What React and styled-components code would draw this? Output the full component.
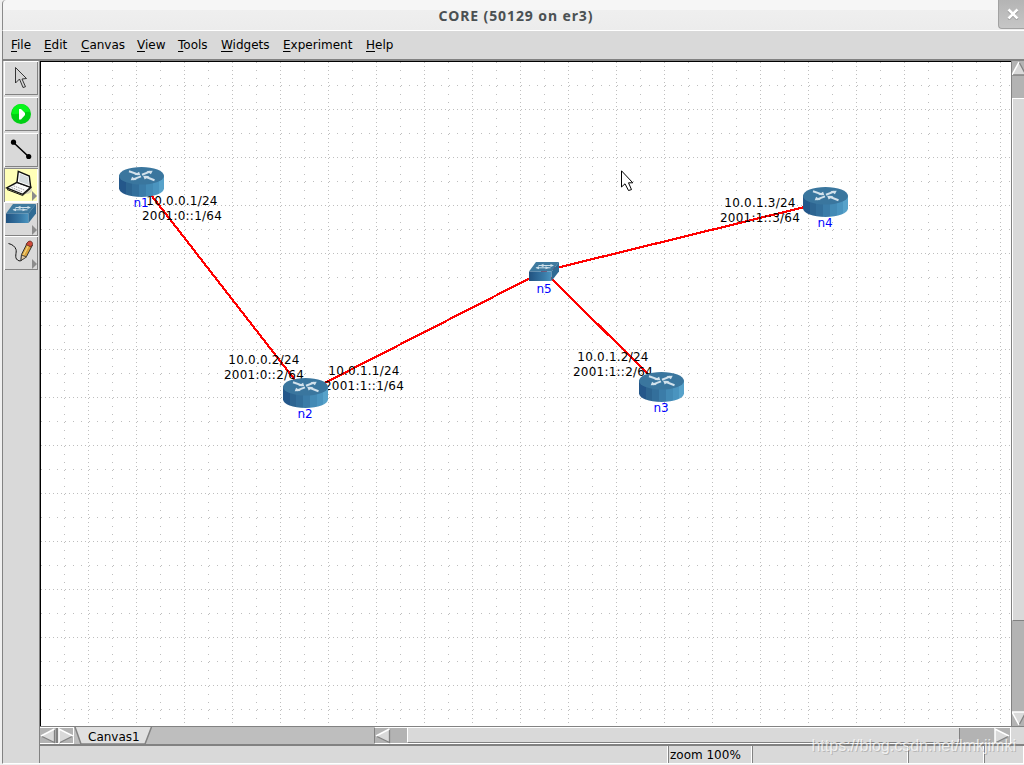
import React from "react";
import styled, { createGlobalStyle } from "styled-components";

// Data -----------------------------------------------------------------------

const menus = [
  { name: "File", width: 33 },
  { name: "Edit", width: 37 },
  { name: "Canvas", width: 56 },
  { name: "View", width: 41 },
  { name: "Tools", width: 43 },
  { name: "Widgets", width: 62 },
  { name: "Experiment", width: 83 },
  { name: "Help", width: 40 },
];

// positions are canvas coordinates of the node centre
const nodes = [
  { id: "n1", type: "router", x: 100, y: 120 },
  { id: "n2", type: "router", x: 264, y: 331 },
  { id: "n3", type: "router", x: 620, y: 325 },
  { id: "n4", type: "router", x: 784, y: 140 },
  { id: "n5", type: "switch", x: 503, y: 209 },
];

const links = [
  ["n1", "n2"],
  ["n2", "n5"],
  ["n5", "n3"],
  ["n5", "n4"],
];

const addresses = [
  { ip4: "10.0.0.1/24", ip6: "2001:0::1/64", x: 141, y: 132 },
  { ip4: "10.0.0.2/24", ip6: "2001:0::2/64", x: 223, y: 291 },
  { ip4: "10.0.1.1/24", ip6: "2001:1::1/64", x: 323, y: 302 },
  { ip4: "10.0.1.2/24", ip6: "2001:1::2/64", x: 572, y: 288 },
  { ip4: "10.0.1.3/24", ip6: "2001:1::3/64", x: 719, y: 134 },
];

const findNode = (id) => nodes.find((node) => node.id === id);

// Icons ----------------------------------------------------------------------

const RouterIcon = () => (
  <svg width="46" height="31" viewBox="-.5 .4 46 31">
    <defs>
      <linearGradient id="routerSide">
        <stop offset="0" stopColor="#24578a" />
        <stop offset=".16" stopColor="#24578a" />
        <stop offset=".16" stopColor="#2d6591" />
        <stop offset=".3" stopColor="#2d6591" />
        <stop offset=".3" stopColor="#336f9b" />
        <stop offset=".45" stopColor="#336f9b" />
        <stop offset=".45" stopColor="#3b7ca8" />
        <stop offset=".6" stopColor="#3b7ca8" />
        <stop offset=".6" stopColor="#438ab5" />
        <stop offset=".75" stopColor="#438ab5" />
        <stop offset=".75" stopColor="#4a94bf" />
        <stop offset=".88" stopColor="#4a94bf" />
        <stop offset=".88" stopColor="#57a2ca" />
        <stop offset="1" stopColor="#57a2ca" />
      </linearGradient>
    </defs>
    <path d="M0.5 9v12.700c0 5 10 8.600 22.500 8.600s22.500-3.600 22.500-8.600V9z" fill="url(#routerSide)" />
    <ellipse cx="23" cy="9.200" rx="22.500" ry="8.800" fill="#3a769e" />
    <g stroke="#d3e2ec" strokeWidth="2">
      <path d="M10.500 4.600l9 3.200" />
      <path d="M23.500 8.200l8-3.200" />
      <path d="M36 13.600l-9-3.400" />
      <path d="M22.500 9.800l-8 3" />
    </g>
    <g fill="#d3e2ec">
      <path d="M21.800 8.600L20.600 5.200l-5 3.200z" />
      <path d="M34.200 4.200l-6.400.2 4.600 3.200z" />
      <path d="M24.600 9.200l6.400.2-4.800 3.400z" />
      <path d="M12.200 13.600l1.400-3.400 4.800 3.200z" />
    </g>
  </svg>
);

const SwitchIcon = ({ width = 30, height = 19 }) => (
  <svg width={width} height={height} viewBox="0 0 30 19" preserveAspectRatio="none">
    <defs>
      <linearGradient id="switchFront">
        <stop offset="0" stopColor="#21527f" />
        <stop offset=".3" stopColor="#2b6492" />
        <stop offset=".65" stopColor="#3879a6" />
        <stop offset="1" stopColor="#4b95c0" />
      </linearGradient>
    </defs>
    <path d="M7 0h23l-7.500 9.500H0z" fill="#3f7a9f" />
    <path d="M0 9.500h22.500V19H0z" fill="url(#switchFront)" />
    <path d="M30 0v9.500L22.500 19V9.500z" fill="#2f6b94" />
    <path d="M9.500 3.500h14M7.500 5.800h14" stroke="#cfe0ea" />
    <path d="M11 3.500l3.500-1.800v3.600zM25 3.500l-3.500-1.500v3zM6.500 5.800l3.500-1.500v3zM20 5.800l-3.500-1.500v3z" fill="#cfe0ea" />
  </svg>
);

const toolIcons = {
  select: (
    <path d="M11.500 6.500v15.500l4-4 3.500 8.500 2.500-.8-3.500-7.700 4.500-.5z" fill="#d4d4d4" stroke="#222" strokeWidth=".9" />
  ),
  start: (
    <>
      <circle cx="17" cy="17" r="10" fill="#00cf14" />
      <path d="M8 17a9 9 0 0 1 18-2c-5-1-11 3-18 2z" fill="#07f51b" />
      <path d="M15 12h2l4 4v2l-4 4.500h-2z" fill="#fff" />
    </>
  ),
  link: (
    <>
      <path d="M9.500 9.500l15 14" stroke="#000" strokeWidth="1.500" />
      <circle cx="9.500" cy="9.200" r="2.600" />
      <circle cx="24.700" cy="23.500" r="2.600" />
    </>
  ),
  host: (
    <>
      <ellipse cx="22" cy="22" rx="6" ry="4" fill="#d8d6bd" />
      <path d="M13 14.300l13.700 5-8 7-16-6.300z" fill="#fafafa" stroke="#111" strokeWidth="1.400" />
      <path d="M3 21.500l15.700 6 8-7.300" fill="none" stroke="#111" />
      <path d="M14.300 3.300l11 4.700 1.400 11.300-13.700-5z" fill="#fff" stroke="#111" strokeWidth="1.400" />
      <path d="M15.800 5.600l8.200 3.600 1 7.800-10-3.600z" fill="#d4dadd" />
      <path d="M9.500 17.800l11.500 4.500M7.500 19.500l10.500 4.300" stroke="#999" strokeDasharray="1.500 1" />
    </>
  ),
  pencil: (
    <>
      <path d="M4.500 7.500c4 1 6.500 3 7.500 6s-2 8 1.500 10.500c2 1.500 3.500 1 5-.5" fill="none" stroke="#111" />
      <path d="M17 24.500l.5-6L23.500 6.500l5 2.500-6 11.500z" fill="#d9a23a" stroke="#333" />
      <path d="M19.500 19l5.500-10.500" stroke="#f3d583" strokeWidth="1.200" />
      <path d="M17 24.500l.5-5.500 5 2z" fill="#dcc5a0" stroke="#333" strokeWidth=".8" />
      <path d="M23.500 6.500c1.500-2.500 5.500-1.500 5 2l-1.500 2.500-5-2.500z" fill="#cf4a3b" stroke="#5c2a22" strokeWidth=".8" />
    </>
  ),
};

const tools = [
  { id: "select", gap: 2 },
  { id: "start", gap: 2 },
  { id: "link", gap: 1 },
  { id: "host", active: true, more: true },
  { id: "switch", more: true },
  { id: "pencil", more: true },
];

const arrows = {
  left: { face: "1,8 15,1 15,15", light: "M1 8L14.500 1", dark: "M14.500 1V14.500L1 8" },
  right: { face: "1,1 15,8 1,15", light: "M1 15V1L15 8", dark: "M15 8L1 15" },
  up: { face: "7,1 14,14 0,14", light: "M0 14L7 1", dark: "M7 1L14 14H0" },
  down: { face: "0,1 14,1 7,14", light: "M14 1H0L7 14", dark: "M7 14L14 1" },
};

const Arrow = ({ direction, width = 16, height = 16, box = "0 0 16 16" }) => (
  <ArrowIcon width={width} height={height} viewBox={box} preserveAspectRatio="none">
    <polygon points={arrows[direction].face} fill="#d9d9d9" />
    <path d={arrows[direction].dark} fill="none" stroke="#828282" strokeWidth="1.300" />
    <path d={arrows[direction].light} fill="none" stroke="#fff" strokeWidth="1.500" />
  </ArrowIcon>
);

// Components -----------------------------------------------------------------

const Toolbar = () => (
  <StyledToolbar>
    {tools.map((tool) => (
      <ToolButton key={tool.id} $active={tool.active} $gap={tool.gap}>
        <svg width="34" height="34" viewBox="0 0 34 34">
          {tool.id === "switch" ? (
            <svg x="2" y="2">
              <SwitchIcon width={30} height={19} />
            </svg>
          ) : (
            toolIcons[tool.id]
          )}
          {tool.more && <path d="M28 23l5 5-5 5z" fill="#8c8c8c" />}
        </svg>
      </ToolButton>
    ))}
  </StyledToolbar>
);

const Topology = () => (
  <Canvas>
    <Drawing width="970" height="664">
      <defs>
        <pattern id="grid" x="-1" y="-1" width="48" height="48" patternUnits="userSpaceOnUse">
          <g stroke="#bebebe" shapeRendering="crispEdges">
            <path d="M.5 1V48M1 .5H48" strokeDasharray="1 3" />
            <path d="M24.500 1V48M1 24.500H48" strokeDasharray="1 7" />
          </g>
        </pattern>
      </defs>
      <rect width="970" height="664" fill="url(#grid)" />
      <g stroke="#ff0000" strokeWidth="2.200" shapeRendering="crispEdges">
        {links.map(([from, to]) => {
          const a = findNode(from);
          const b = findNode(to);
          return <line key={from + to} x1={a.x} y1={a.y} x2={b.x} y2={b.y} />;
        })}
      </g>
    </Drawing>
    {addresses.map(({ ip4, ip6, x, y }) => (
      <Address key={ip6} style={{ left: x, top: y }}>
        <span>{ip4}</span>
        <span>{ip6}</span>
      </Address>
    ))}
    {nodes.map(({ id, type, x, y }) => (
      <Node key={id} style={{ left: x, top: y }} $type={type}>
        {type === "router" ? <RouterIcon /> : <SwitchIcon />}
        <span>{id}</span>
      </Node>
    ))}
    <Pointer width="14" height="22" viewBox="0 0 14 22">
      <path d="M.5 .8v16.200l3.500-3.200 3.500 6.700 3-.9-3-6.800h4.300z" fill="#fff" stroke="#000" />
    </Pointer>
  </Canvas>
);

const App = () => {
  return (
    <Window>
      <GlobalStyle />
      <TitleBar>
        <Title>CORE (50129 on er3)</Title>
        <CloseButton>
          <svg width="12" height="12" viewBox="0 0 12 12">
            <path d="M1.500 2.500l9 9M10.500 2.500l-9 9" stroke="#8d8d8d" strokeWidth="2.500" />
            <path d="M1.500 1.500l9 9M10.500 1.500l-9 9" stroke="#fff" strokeWidth="2.600" />
          </svg>
        </CloseButton>
      </TitleBar>
      <Frame>
        <MenuBar>
          {menus.map(({ name, width }) => (
            <MenuItem key={name} $width={width}>
              <u>{name[0]}</u>
              {name.slice(1)}
            </MenuItem>
          ))}
        </MenuBar>
        <Body>
          <Toolbar />
          <Workspace>
            <View>
              <Topology />
              <VerticalScroll>
                <Arrow direction="up" width={14} height={15} box="0 0 14 15" />
                <VerticalThumb />
                <Arrow direction="down" width={14} height={15} box="0 0 14 15" />
              </VerticalScroll>
            </View>
            <BottomRow>
              <TabScroll>
                <Arrow direction="left" />
                <Divider />
                <Arrow direction="right" />
              </TabScroll>
              <Tab>
                <svg width="79" height="18" viewBox="0 0 79 18">
                  <path d="M1 0l6 17h64l6.500-17" fill="#e0e0e0" stroke="#828282" strokeWidth="1.500" />
                </svg>
                <span>Canvas1</span>
              </Tab>
              <HorizontalScroll>
                <Arrow direction="left" />
                <HorizontalThumb />
                <Arrow direction="right" />
              </HorizontalScroll>
            </BottomRow>
            <StatusBar>
              <StatusCell $width={629} />
              <StatusCell $width={84}>zoom 100%</StatusCell>
              <StatusCell $width={156} />
              <StatusCell $width={76} />
              <StatusCell $width={40} />
            </StatusBar>
          </Workspace>
        </Body>
      </Frame>
      <Watermark>https://blog.csdn.net/lmkjimki</Watermark>
    </Window>
  );
};

// Styled Components ----------------------------------------------------------

const GlobalStyle = createGlobalStyle`
  * {
    box-sizing: border-box;
  }

  body {
    margin: 0;
    overflow: hidden;
    font: 12px/15px "DejaVu Sans", sans-serif;
    color: #000;
  }

  svg {
    display: block;
    flex: none;
  }
`;

const Window = styled.div`
  position: relative;
  display: flex;
  flex-direction: column;
  width: 1024px;
  height: 765px;
  padding-left: 2px;
  overflow: hidden;
  background: #f0f0f0;
`;

const TitleBar = styled.header`
  display: flex;
  flex: none;
  justify-content: flex-end;
  height: 30px;
  border-left: 1px solid #8a8a8a;
  border-top-left-radius: 4px;
  background: linear-gradient(#f6f6f6 0 10px, #efefef 10px, #ececec);
`;

const Title = styled.h1`
  flex: 1;
  margin: 0;
  padding-left: 31px;
  font: bold 14px/32px "Noto Sans", "Open Sans", sans-serif;
  letter-spacing: 0.9px;
  text-align: center;
  color: #4a5052;
`;

const CloseButton = styled.div`
  display: flex;
  align-items: center;
  justify-content: center;
  width: 26px;
  height: 29px;
  padding-left: 3px;
  border: solid #a2a2a2;
  border-width: 0 0 1px 1px;
  border-bottom-left-radius: 4px;
  background: linear-gradient(#b4b4b4, #c6c6c6);
`;

const Frame = styled.div`
  display: flex;
  flex: none;
  flex-direction: column;
  height: 734px;
  border-left: 1px solid #828282;
  border-top: 1px solid #fff;
  border-bottom: 1px solid #fff;
  background: #d9d9d9;
`;

const MenuBar = styled.nav`
  display: flex;
  flex: none;
  height: 30px;
  padding: 7px 0 0 8px;
  border-bottom: 2px solid #828282;
`;

const MenuItem = styled.div`
  width: ${({ $width }) => $width}px;
  white-space: nowrap;

  u {
    text-underline-offset: 2px;
    text-decoration-thickness: 1px;
    text-decoration-skip-ink: none;
  }
`;

const Body = styled.div`
  display: flex;
  flex: 1;
  min-height: 0;
`;

const StyledToolbar = styled.aside`
  display: flex;
  flex: none;
  flex-direction: column;
  width: 36px;
  padding-left: 1px;
`;

const ToolButton = styled.div`
  flex: none;
  width: 34px;
  height: 34px;
  margin-bottom: ${({ $gap = 0 }) => $gap}px;
  background: ${({ $active }) => ($active ? "#ffffb8" : "#d9d9d9")};
  box-shadow: ${({ $active }) =>
    $active
      ? "inset 1px 1px #8a8a8a, inset -1px -1px #fff"
      : "inset 1px 1px #fff, inset -1px -1px #828282"};
`;

const Workspace = styled.main`
  display: flex;
  flex: 1;
  flex-direction: column;
  min-width: 0;
  border-left: 1px solid #828282;
`;

const View = styled.section`
  display: flex;
  flex: none;
  height: 666px;
  border-bottom: 1px solid #828282;
`;

const Canvas = styled.div`
  position: relative;
  flex: none;
  width: 971px;
  height: 665px;
  overflow: hidden;
  border-left: 1px solid #000;
  border-top: 1px solid #000;
  background: #fff;
`;

const Drawing = styled.svg`
  display: block;
`;

const Address = styled.div`
  position: absolute;
  display: flex;
  flex-direction: column;
  align-items: center;
  width: 90px;
  margin-left: -45px;
  line-height: 15px;
  letter-spacing: 0.23px;
  white-space: nowrap;
`;

const Node = styled.div`
  position: absolute;
  display: flex;
  flex-direction: column;
  align-items: center;
  width: 46px;
  margin: ${({ $type }) => ($type === "router" ? "-15px 0 0 -23px" : "-9px 0 0 -23px")};
  color: #0000ff;

  span {
    margin-top: ${({ $type }) => ($type === "router" ? -2 : 1)}px;
  }
`;

const Pointer = styled.svg`
  position: absolute;
  left: 580px;
  top: 108px;
`;

const ArrowIcon = styled.svg`
  flex: none;
`;

const VerticalScroll = styled.div`
  display: flex;
  flex: 1;
  flex-direction: column;
  overflow: hidden;
  border-left: 1px solid #828282;
  background: #b3b3b3;
`;

const VerticalThumb = styled.div`
  flex: none;
  width: 14px;
  height: 523px;
  margin: 22px 0 90px;
  border: solid #fff;
  border-width: 1px 0 1px 1px;
  border-bottom-color: #828282;
  background: #d9d9d9;
`;

const BottomRow = styled.div`
  display: flex;
  flex: none;
  height: 19px;
  border-bottom: 2px solid #828282;
  background: #bebebe;
`;

const TabScroll = styled.div`
  display: flex;
  flex: none;
  width: 34px;
  height: 17px;
  border: solid #fff;
  border-width: 1px 1px 1px 0;
  background: #b3b3b3;
`;

const Divider = styled.div`
  width: 2px;
  border: solid #828282;
  border-width: 0 1px;
`;

const Tab = styled.div`
  display: grid;
  flex: none;
  width: 79px;
  height: 17px;

  > * {
    grid-area: 1 / 1;
  }

  span {
    padding: 3px 0 0 14px;
  }
`;

const HorizontalScroll = styled.div`
  display: flex;
  flex: none;
  width: 637px;
  height: 17px;
  margin-left: 221px;
  border: solid #fff;
  border-width: 1px 1px 1px 1px;
  border-left-color: #828282;
  background: #b3b3b3;
  box-shadow: 13px 0 #d9d9d9;
`;

const HorizontalThumb = styled.div`
  flex: none;
  width: 553px;
  margin: 0 34px 0 16px;
  border: solid #fff;
  border-width: 0 1px 1px 1px;
  border-right-color: #828282;
  border-bottom-color: #828282;
  background: #d9d9d9;
`;

const StatusBar = styled.footer`
  display: flex;
  flex: 1;
  min-height: 0;
`;

const StatusCell = styled.div`
  flex: none;
  width: ${({ $width }) => $width}px;
  padding: 2px 0 0 1px;
  box-shadow: inset -1px 0 #828282, inset -2px 0 #fff;
  white-space: nowrap;
`;

const Watermark = styled.div`
  position: absolute;
  right: 8px;
  top: 736px;
  font: 16px/20px "Liberation Sans", sans-serif;
  color: rgba(255, 255, 255, 0.7);
  text-shadow: 1px 1px rgba(120, 120, 120, 0.35);
`;
// ----------------------------------------------------------------------------

export default App;
